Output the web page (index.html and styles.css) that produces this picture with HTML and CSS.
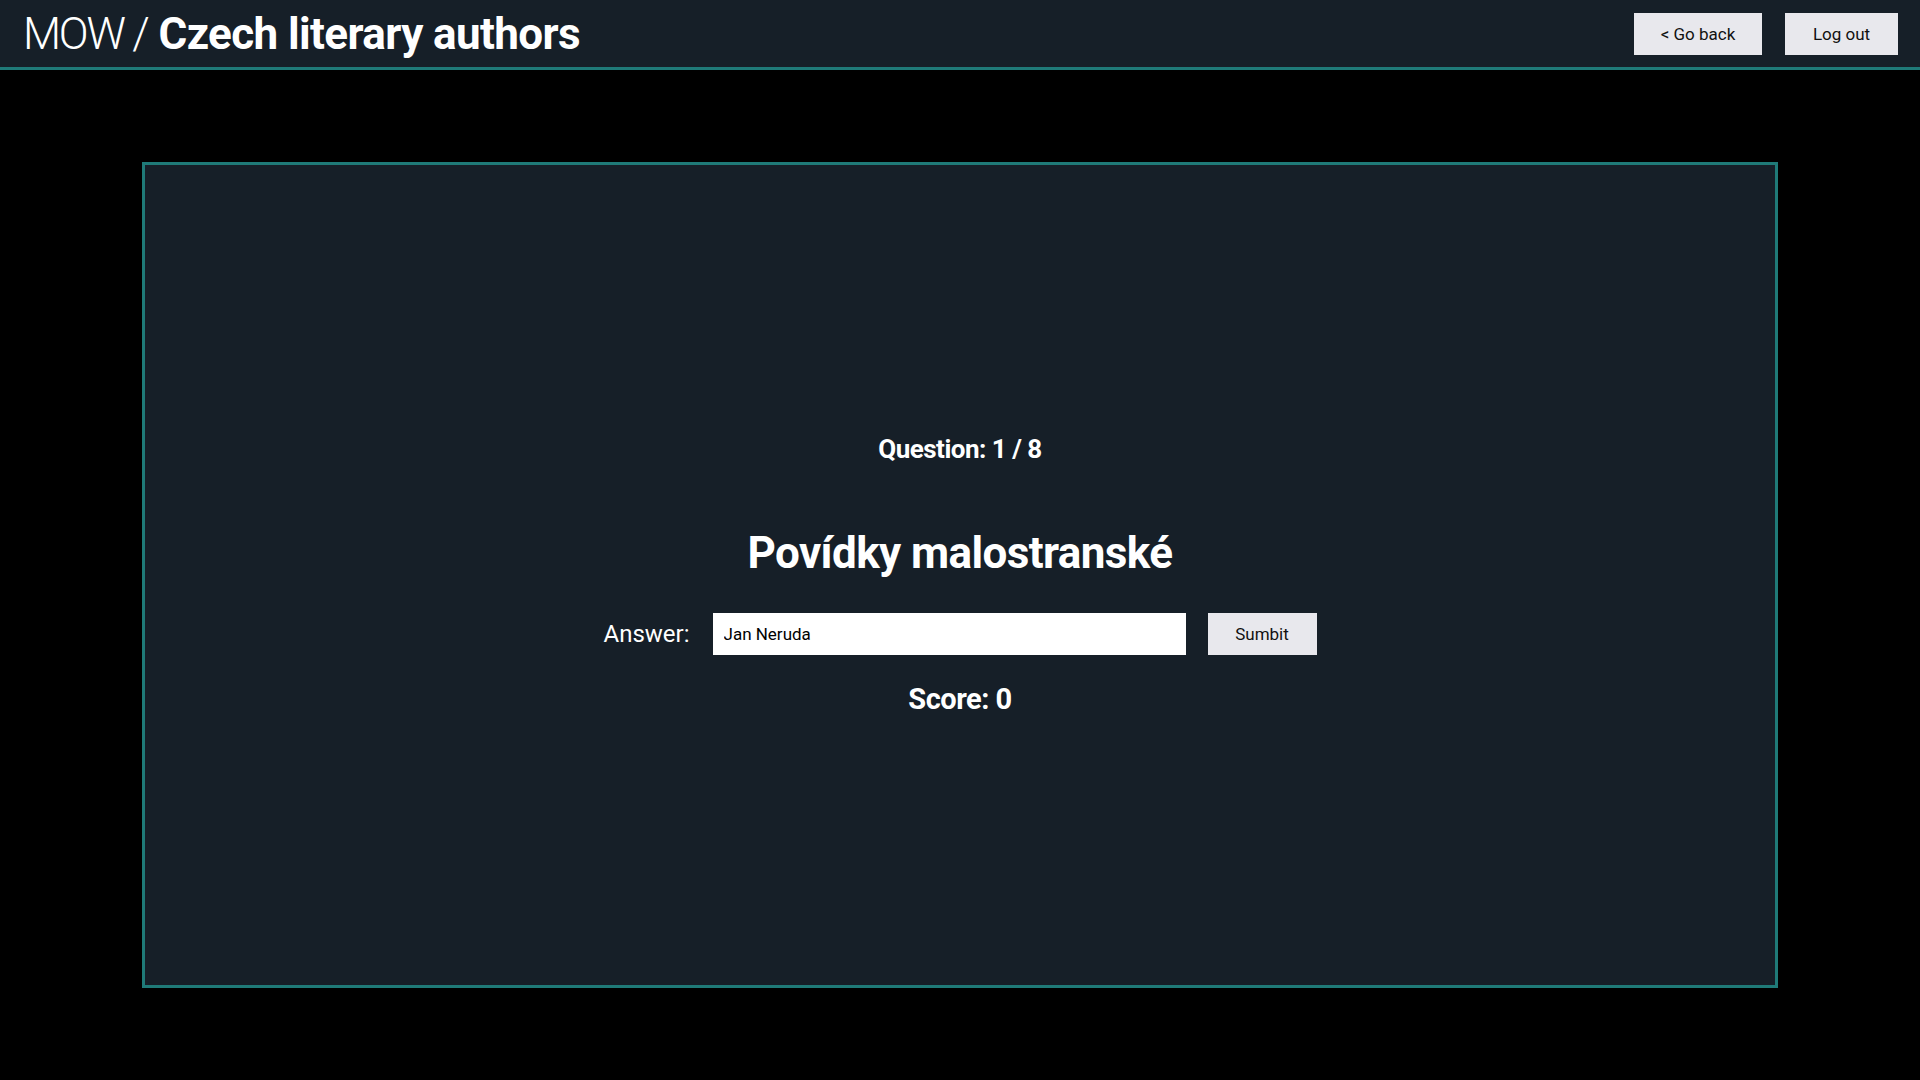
FILE: index.html
```html
<!DOCTYPE html>
<html lang="en">
<head>
<meta charset="utf-8">
<title>MOW / Czech literary authors</title>
<link rel="stylesheet" href="styles.css">
</head>
<body>
<header class="topbar">
  <h1 class="brand"><span class="brand-light">MOW /</span> <span class="brand-bold">Czech literary authors</span></h1>
  <nav class="actions">
    <button class="btn btn-back">&lt; Go back</button>
    <button class="btn btn-logout">Log out</button>
  </nav>
</header>
<main class="stage">
  <section class="card">
    <div class="quiz">
      <p class="counter">Question: 1 / 8</p>
      <h2 class="prompt">Povídky malostranské</h2>
      <form class="answer-row">
        <label class="answer-label" for="answer">Answer:</label>
        <input id="answer" class="answer-input" type="text" value="Jan Neruda">
        <button type="button" class="btn btn-submit">Sumbit</button>
      </form>
      <p class="score">Score: 0</p>
    </div>
  </section>
</main>
</body>
</html>
```
FILE: styles.css
```css
* { box-sizing: border-box; }
html, body {
  margin: 0;
  padding: 0;
  background: #000;
  height: 100%;
}
body {
  font-family: Roboto, "Liberation Sans", sans-serif;
  color: #fff;
}
.topbar {
  height: 70px;
  background: #161f28;
  border-bottom: 3px solid #1f7a78;
  display: flex;
  align-items: center;
  justify-content: space-between;
  padding: 1px 22px 0 23px;
}
.brand {
  margin: 0;
  font-size: 44px;
  line-height: 1;
  font-weight: 400;
}
.brand-light {
  font-weight: 300;
  letter-spacing: -2.2px;
}
.brand-bold {
  font-weight: 700;
  letter-spacing: -0.6px;
}
.actions {
  display: flex;
  gap: 23px;
}
.btn {
  font-family: Roboto, "Liberation Sans", sans-serif;
  background: #e8e8ed;
  color: #111;
  border: none;
  border-radius: 0;
  font-size: 17px;
  height: 42px;
  padding: 0;
  cursor: pointer;
}
.btn-back { width: 128px; }
.btn-logout { width: 113px; }
.stage {
  padding: 92px 142px 0;
}
.card {
  height: 826px;
  background: #161f28;
  border: 3px solid #1f7a78;
  display: flex;
  align-items: center;
  justify-content: center;
}
.quiz {
  display: flex;
  flex-direction: column;
  align-items: center;
}
.counter {
  margin: 0;
  font-size: 26px;
  line-height: 30px;
  font-weight: 700;
  letter-spacing: -0.5px;
}
.prompt {
  margin: 63px 0 0;
  font-size: 44px;
  line-height: 52px;
  font-weight: 700;
  letter-spacing: -0.6px;
}
.answer-row {
  margin: 34px 0 0;
  display: flex;
  align-items: center;
  gap: 23px;
}
.answer-label {
  font-size: 24px;
  line-height: 42px;
}
.answer-input {
  width: 473px;
  height: 42px;
  border: none;
  padding: 0 11px;
  font-family: Roboto, "Liberation Sans", sans-serif;
  font-size: 17px;
  color: #000;
  background: #fff;
  outline: none;
}
.btn-submit {
  width: 109px;
  height: 42px;
  margin-left: -1px;
}
.score {
  margin: 27px 0 0;
  font-size: 29px;
  line-height: 34px;
  font-weight: 700;
  letter-spacing: -0.5px;
}
```
